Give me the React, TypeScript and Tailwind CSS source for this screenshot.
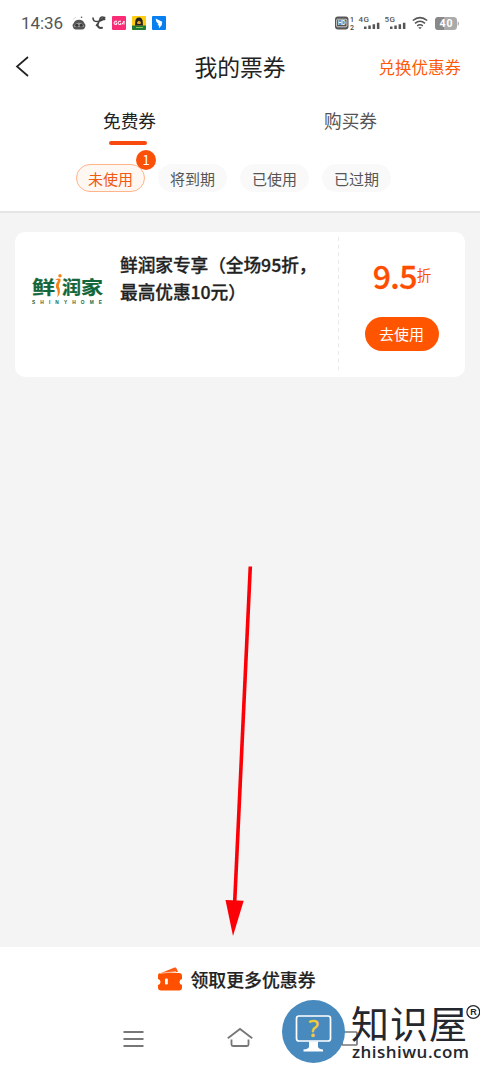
import clsx from "clsx";

const filters = [
  { label: "未使用", count: 1 },
  { label: "将到期" },
  { label: "已使用" },
  { label: "已过期" },
];

function StatusBar() {
  return (
    <div className="flex h-[46px] items-center justify-between pl-[21px] pr-[21px] text-[#555]">
      <div className="flex items-center">
        <span className="w-[51px] font-['Roboto',sans-serif] text-[17px] leading-[20px] tracking-[-0.1px]">14:36</span>
        <svg width="14" height="14" viewBox="0 0 14 14">
          <path d="M3 5Q7 2.5 11 5L13.5 9Q13 13.5 10 13.5H4Q1 13.5 .5 9Z" fill="#555" />
          <path d="M2.5 9Q7 4.5 11.5 9L12 11H2Z" fill="#999" />
          <ellipse cx="4.8" cy="9.4" rx="1.6" ry="1.3" fill="#333" />
          <ellipse cx="9.2" cy="9.4" rx="1.6" ry="1.3" fill="#333" />
          <path d="M1 3.5L4 1" stroke="#ddd" fill="none" />
          <circle cx="9.5" cy="1.3" r=".8" fill="#555" />
        </svg>
        <svg className="ml-[6px]" width="14" height="14" viewBox="0 0 14 14" fill="none" stroke="#444" strokeLinecap="round">
          <path d="M1 2Q1 6 6 5.5Q10 5 12.5 1.5Q8.5 0 7.8 3.5Q6.5 8 4.5 9.5" strokeWidth="1.6" />
          <path d="M9 3.2H12.5M5.5 8.5Q6 12.5 10 11.8" strokeWidth="2" />
        </svg>
        <svg className="ml-[6px]" width="14" height="14" viewBox="0 0 14 14">
          <rect width="14" height="14" rx="1" fill="#fb2c76" />
          <path d="M5 5.2Q2 4.5 2 7Q2 9 4.7 8.5V7H3.5M9 5.2Q6 4.5 6 7Q6 9 8.7 8.5V7M10 8.5L12 5V8.5" fill="none" stroke="#fff" strokeWidth="1" />
        </svg>
        <svg className="ml-[6px]" width="14" height="14" viewBox="0 0 14 14">
          <rect width="14" height="14" rx="1" fill="#ffcd12" />
          <path d="M0 9.5H14V13Q14 14 13 14H1Q0 14 0 13Z" fill="#207a31" />
          <path d="M3.2 7Q3 1.5 7 1.5T10.8 7L11 9.5H3Z" fill="#222" />
          <path d="M5 6.5Q7 3 9 6.5L8.5 8H5.5Z" fill="#e8a626" />
          <path d="M4 11.5H11" stroke="#8fc25a" />
        </svg>
        <svg className="ml-[6px]" width="14" height="14" viewBox="0 0 14 14">
          <rect width="14" height="14" rx="1" fill="#087ff0" />
          <path d="M3.5 2.5L9.8 5.5Q10.7 6.5 9.7 8L9.9 9L6.8 12.4L7.2 9.8L5.5 9.1L6.5 8Q4 6.5 3.5 2.5Z" fill="#fff" />
        </svg>
      </div>
      <div className="flex items-center">
        <svg width="20" height="14" viewBox="0 0 20 14" className="overflow-visible" fontFamily="Roboto, sans-serif">
          <rect width="13.5" height="13" y=".5" rx="3" fill="#555" />
          <rect x="1.6" y="3.2" width="10.3" height="7.6" rx="1" fill="none" stroke="#fff" strokeWidth=".7" />
          <text x="3" y="9.3" fontSize="6.5" fontWeight="700" fill="#fff" textLength="7.5" lengthAdjust="spacingAndGlyphs">HD</text>
          <text x="15" y="6" fontSize="7" fontWeight="500" fill="#444">1</text>
          <text x="15" y="13.8" fontSize="7" fontWeight="500" fill="#444">2</text>
        </svg>
        <Signal label="4G" />
        <Signal label="5G" />
        <svg className="ml-[5px]" width="16" height="14" viewBox="0 0 16 14" fill="none" stroke="#555" strokeWidth="1.6">
          <path d="M.8 4.5Q8-1.3 15.2 4.5M3 7.3Q8 3.2 13 7.3M5.2 9.8Q8 7.7 10.8 9.8" />
          <path d="M6.2 11.2H9.8L8 13.2Z" fill="#555" stroke="none" />
        </svg>
        <svg className="ml-[7px]" width="24" height="13" viewBox="0 0 24 13">
          <rect width="22" height="13" rx="3.5" fill="#aaa" />
          <path d="M9 0H3.5Q0 0 0 3.5V9.5Q0 13 3.5 13H9Z" fill="#888" />
          <path d="M22.7 4V9Q24 8 24 6.5T22.7 4Z" fill="#aaa" />
          <text x="4.5" y="10.3" fontFamily="Roboto, sans-serif" fontSize="10.5" fontWeight="700" fill="#fff" textLength="13">40</text>
        </svg>
      </div>
    </div>
  );
}

function Signal({ label }: { label: string }) {
  return (
    <svg className="ml-[4px] overflow-visible" width="22" height="14" viewBox="0 0 22 14" fill="#555">
      <text x="-.5" y="6" fontFamily="Roboto, sans-serif" fontSize="8" fontWeight="500" textLength="10.5">{label}</text>
      <path d="M5 10.5h2.5V13H5zM9.3 9.5h2.5V13H9.3zM13.6 8.3h2.5V13h-2.5zM17.9 6.8h2.5V13h-2.5z" />
    </svg>
  );
}

function ShopLogo() {
  return (
    <svg width="72" height="32" viewBox="0 0 72 32" className="shrink-0 overflow-visible" fontFamily="'Noto Sans CJK SC', sans-serif">
      <g fill="#12663a" fontSize="22" fontWeight="700" stroke="#12663a" strokeWidth=".3">
        <text x="0" y="25.5" textLength="23" lengthAdjust="spacingAndGlyphs" transform="scale(1 .83)">鲜</text>
        <text x="30" y="25.5" textLength="19" lengthAdjust="spacingAndGlyphs" transform="scale(1 .83)">润</text>
        <text x="49" y="25.5" textLength="22" lengthAdjust="spacingAndGlyphs" transform="scale(1 .83)">家</text>
      </g>
      <path d="M23 6.5Q29.5 4 28.5 8Q27 11 26.8 13Q30 20 25 24.5Q27 19 24 14.5Q23.5 10 26 8Q26 6.5 23 6.5Z" fill="#f58216" />
      <circle cx="28" cy="2.7" r="1.7" fill="#f58216" />
      <text x="0" y="30.6" fontFamily="Liberation Sans, sans-serif" fontSize="4.8" fontWeight="700" fill="#12663a" textLength="70">SHINYHOME</text>
    </svg>
  );
}

function Coupon() {
  return (
    <div className="mx-[15px] mt-[19px] flex h-[145px] rounded-[10px] bg-white">
      <div className="flex flex-1 pl-[17px]">
        <div className="mt-[41px]">
          <ShopLogo />
        </div>
        <p className="ml-[16px] mt-[19px] whitespace-nowrap text-[17.7px] font-medium leading-[26.5px] tracking-[-0.05px] text-[#222] [-webkit-text-stroke:0.3px_#222]">
          鲜润家专享（全场95折，
          <br />
          最高优惠10元）
        </p>
      </div>
      <svg className="my-[5px] shrink-0" width="2" height="135">
        <path d="M1.5 0V135" stroke="#e9e9e9" strokeDasharray="4 3.6" />
      </svg>
      <div className="flex w-[126px] flex-col items-center">
        <div className="mt-[22px] flex h-[42px] items-center text-[#ff4d00]">
          <span className="text-[32px] font-medium leading-[42px] tracking-[-0.6px] [-webkit-text-stroke:0.3px_#ff4d00]">9.5</span>
          <span className="text-[14.5px] leading-[42px]">折</span>
        </div>
        <button className="mr-[1px] mt-[21px] h-[34px] w-[74px] rounded-full bg-[#ff5500] text-[15px] leading-[34px] text-white">去使用</button>
      </div>
    </div>
  );
}

function Watermark() {
  return (
    <div className="absolute left-[281px] top-[999px] flex">
      <svg width="66" height="66" viewBox="0 0 66 66" fill="none">
        <circle cx="32.5" cy="32.5" r="31.5" fill="#488abe" />
        <rect x="15.5" y="17" width="34" height="25" rx="2.5" stroke="#fff" strokeWidth="1.7" />
        <path d="M28 42.5H37V48Q38 50 42 50.5V52.5H22.5V50.5Q27 50 28 48Z" fill="#fff" />
        <text x="32.8" y="38" textAnchor="middle" fontFamily="Noto Sans, sans-serif" fontSize="24" fill="#f0cc38" stroke="#f0cc38" strokeWidth=".4">?</text>
      </svg>
      <svg width="133" height="68" viewBox="0 0 133 68" className="overflow-visible">
        <g fontFamily="'Noto Sans CJK SC', sans-serif" fontSize="38" fill="#24272e" fontWeight="400">
          <text x="4" y="38.5">知</text>
          <text x="43" y="38.5">识</text>
          <text x="82" y="38.5">屋</text>
        </g>
        <circle cx="126.3" cy="13" r="6.4" fill="none" stroke="#24272e" strokeWidth="1.3" />
        <text x="126.5" y="16.2" textAnchor="middle" fontFamily="Liberation Sans, sans-serif" fontSize="9" fontWeight="700" fill="#24272e">R</text>
        <text x="5" y="59" fontFamily="Open Sans, sans-serif" fontSize="17" fontWeight="600" fill="#24272e" textLength="117">zhishiwu.com</text>
      </svg>
    </div>
  );
}

export default function App() {
  return (
    <div className="relative flex h-[1067px] w-[480px] flex-col overflow-hidden bg-[#f4f4f4] font-['Noto_Sans_CJK_SC',sans-serif]">
      <header className="h-[213px] shrink-0 border-b-2 border-[#e5e5e5] bg-white">
        <StatusBar />
        <div className="grid h-[40px] grid-cols-[1fr_auto_1fr] items-center pl-[15px] pr-[19px]">
          <svg width="16" height="22" viewBox="0 0 16 22" fill="none" stroke="#222" strokeWidth="1.7">
            <path d="M13 1L2 10.5L13 20" />
          </svg>
          <h1 className="pl-[4px] text-[22.8px] leading-[42px] text-[#222]">我的票券</h1>
          <span className="text-right text-[16.5px] leading-[40px] text-[#ff5a0a]">兑换优惠券</span>
        </div>
        <nav className="grid grid-cols-2 pl-[19px] pr-[19px] pt-[21px] text-[17.7px] leading-[26px]">
          <div className="flex flex-col items-center">
            <span className="text-[#222]">免费券</span>
            <span className="mr-[3px] mt-[8px] h-[4px] w-[38px] rounded-full bg-[#f84a10]" />
          </div>
          <div className="text-center text-[#555]">购买券</div>
        </nav>
        <div className="mt-[19px] flex gap-[13px] pl-[76px]">
          {filters.map((f) => (
            <div
              key={f.label}
              className={clsx(
                "relative h-[28px] w-[69px] rounded-full border text-center text-[15px] leading-[27px]",
                f.count ? "border-[#ffb48c] bg-[#fff7f1] text-[#f05a12]" : "border-[#f9f9f9] bg-[#f9f9f9] text-[#555]"
              )}
            >
              {f.label}
              {f.count && (
                <span className="absolute -right-[12px] -top-[15px] h-[20px] w-[20px] rounded-full bg-[#fa5008] text-[13px] leading-[19px] text-white">
                  {f.count}
                </span>
              )}
            </div>
          ))}
        </div>
      </header>

      <main className="flex-1">
        <Coupon />
      </main>

      <footer className="h-[120px] shrink-0 bg-white">
        <div className="flex h-[64px] items-center justify-center pr-[7px]">
          <svg width="26" height="24" viewBox="0 0 26 24">
            <path d="M4 6L17.5.5Q19 0 19.7 1.8L21 5Z" fill="#ff5b14" />
            <path d="M3 6H22Q25 6 25 9V12Q22.5 12.3 22.5 15T25 18V20.5Q25 23.5 22 23.5H4Q1 23.5 1 20.5V18Q3.5 17.5 3.5 15T1 12V9Q1 6 3 6Z" fill="#ff5000" />
            <path d="M2.5 6.5L19 4.5" stroke="#ffc4a8" strokeWidth=".8" />
            <rect x="8" y="11.5" width="2.8" height="6" rx=".8" fill="#fff" />
          </svg>
          <span className="ml-[7px] text-[17.9px] font-medium leading-[28px] text-[#222] [-webkit-text-stroke:0.2px_#222]">领取更多优惠券</span>
        </div>
        <div className="flex h-[56px] items-start pl-[123px] pt-[16px]">
          <svg width="21" height="24" viewBox="0 0 21 24" stroke="#777" strokeWidth="2">
            <path d="M.5 5H20.5M.5 12H20.5M.5 19H20.5" />
          </svg>
          <svg className="ml-[83px]" width="26" height="24" viewBox="0 0 26 24" fill="none" stroke="#777" strokeWidth="1.8">
            <path d="M.8 11.3L13 2L25.2 11.3M4.5 12.5V17.5Q4.5 19 6 19H20Q21.5 19 21.5 17.5V12.5" />
          </svg>
          <svg className="ml-[86px]" width="20" height="24" viewBox="0 0 20 24" fill="none" stroke="#777" strokeWidth="1.7">
            <rect x="3" y="5" width="15" height="13" rx="1" />
          </svg>
        </div>
      </footer>

      <svg className="absolute left-[220px] top-[560px]" width="40" height="380" viewBox="0 0 40 380">
        <path d="M30.3 6.5L14.7 342" stroke="#fb0006" strokeWidth="3.6" />
        <path d="M5.5 340L23.7 340.7L13 376Z" fill="#fb0006" />
      </svg>

      <Watermark />
    </div>
  );
}
